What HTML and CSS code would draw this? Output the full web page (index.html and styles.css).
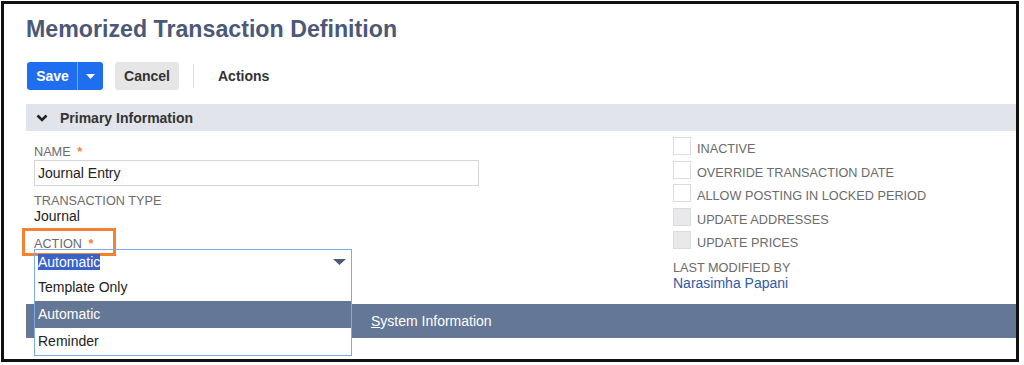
FILE: index.html
```html
<!DOCTYPE html>
<html lang="en">
<head>
    <meta charset="UTF-8">
    <meta name="viewport" content="width=device-width, initial-scale=1.0">
    <title>Memorized Transaction Definition</title>
    <link rel="stylesheet" href="styles.css">
</head>
<body>
    <div class="frame">
        <div class="page">
            <h1 class="page-title">Memorized Transaction Definition</h1>

            <div class="toolbar">
                <div class="btn-group">
                    <button class="btn btn-primary">Save</button>
                    <button class="btn btn-primary btn-caret" aria-label="More save options">
                        <svg width="9" height="5" viewBox="0 0 9 5"><path d="M0 0 L9 0 L4.5 5 Z" fill="#fff"/></svg>
                    </button>
                </div>
                <button class="btn btn-secondary">Cancel</button>
                <span class="toolbar-divider"></span>
                <button class="btn btn-link">Actions</button>
            </div>

            <div class="section-head">
                <svg class="chevron" width="12" height="8" viewBox="0 0 12 8"><path d="M1.5 1.5 L6 6 L10.5 1.5" fill="none" stroke="#222" stroke-width="2.6"/></svg>
                <span>Primary Information</span>
            </div>

            <div class="fields">
                <div class="col-left">
                    <div class="field">
                        <label class="field-label" for="name">Name <span class="req">*</span></label>
                        <input class="text-input" id="name" type="text" value="Journal Entry">
                    </div>
                    <div class="field">
                        <span class="field-label">Transaction Type</span>
                        <span class="field-value">Journal</span>
                    </div>
                    <div class="field">
                        <span class="field-label highlight-box">Action <span class="req">*</span></span>
                        <div class="select-wrap">
                            <div class="select">
                                <span class="selected-text">Automatic</span>
                                <svg class="select-arrow" width="13" height="6" viewBox="0 0 13 6"><path d="M0 0 L13 0 L6.5 6 Z" fill="#4e5b74"/></svg>
                            </div>
                            <ul class="dropdown">
                                <li>Template Only</li>
                                <li class="active">Automatic</li>
                                <li>Reminder</li>
                            </ul>
                        </div>
                    </div>
                </div>

                <div class="col-right">
                    <label class="check-row"><span class="checkbox"></span>Inactive</label>
                    <label class="check-row"><span class="checkbox"></span>Override Transaction Date</label>
                    <label class="check-row"><span class="checkbox"></span>Allow Posting in Locked Period</label>
                    <label class="check-row"><span class="checkbox disabled"></span>Update Addresses</label>
                    <label class="check-row"><span class="checkbox disabled"></span>Update Prices</label>
                    <div class="field modified">
                        <span class="field-label">Last Modified By</span>
                        <a class="field-link" href="#">Narasimha Papani</a>
                    </div>
                </div>
            </div>

            <div class="section-bar">
                <span><u>S</u>ystem Information</span>
            </div>

            <div class="fields fields-system">
                <div class="col-left">
                    <span class="field-label next-date">Next Date <span class="req">*</span></span>
                </div>
                <div class="col-right">
                    <span class="field-label">Next Transaction Date</span>
                </div>
            </div>
        </div>
    </div>
</body>
</html>
```

FILE: styles.css
```css
:root {
    --title-color: #4b5877;
    --primary: #1f6ef0;
    --label-color: #6b6b6b;
    --text-color: #222222;
    --head-bg: #e1e4ea;
    --bar-bg: #647796;
    --accent: #f5822f;
    --link: #3159a8;
}
*, *::before, *::after {
    box-sizing: border-box;
}
body {
    margin: 0;
    background: #ffffff;
    font-family: "Liberation Sans", Arial, sans-serif;
    color: var(--text-color);
}
.frame {
    margin: 1px;
    width: 1018px;
    height: 361px;
    border: 3px solid #111111;
    overflow: hidden;
    background: #ffffff;
}
.page {
    padding-left: 22px;
}
.page-title {
    margin: 0;
    padding-top: 11px;
    font-size: 23.2px;
    line-height: 28px;
    font-weight: bold;
    color: var(--title-color);
}
.toolbar {
    display: flex;
    align-items: center;
    margin-top: 19px;
    padding-left: 1px;
    height: 28px;
}
.btn {
    height: 28px;
    border: none;
    border-radius: 3px;
    font-family: inherit;
    font-size: 14px;
    font-weight: bold;
    padding: 0 10px;
    cursor: pointer;
}
.btn-group {
    display: flex;
}
.btn-primary {
    background: var(--primary);
    color: #ffffff;
}
.btn-group .btn-primary:first-child {
    width: 50px;
    border-radius: 3px 0 0 3px;
    padding: 0 0 0 1px;
}
.btn-caret {
    width: 26px;
    padding: 0;
    border-radius: 0 3px 3px 0;
    border-left: 1px solid #7aa6f5;
    display: flex;
    align-items: center;
    justify-content: center;
}
.btn-secondary {
    margin-left: 12px;
    width: 64px;
    padding: 0;
    background: #e6e6e6;
    color: #333333;
}
.toolbar-divider {
    width: 1px;
    height: 24px;
    margin-left: 14px;
    background: #dddddd;
}
.btn-link {
    margin-left: 14px;
    background: none;
    color: #333333;
}
.section-head {
    margin-top: 14px;
    height: 27px;
    display: flex;
    align-items: center;
    padding-left: 10px;
    background: var(--head-bg);
    font-size: 14px;
    font-weight: bold;
    color: #333333;
}
.chevron {
    margin-right: 12px;
}
.fields {
    display: grid;
    grid-template-columns: 639px 1fr;
    padding-left: 8px;
}
.col-left {
    padding-top: 14px;
}
.col-right {
    padding-top: 6px;
}
.field {
    display: flex;
    flex-direction: column;
}
.field + .field {
    margin-top: 8px;
}
.field-label {
    font-size: 12.7px;
    line-height: 14px;
    text-transform: uppercase;
    color: var(--label-color);
}
.req {
    margin-left: 3px;
    color: var(--accent);
    font-weight: bold;
}
.text-input {
    margin-top: 1px;
    width: 445px;
    height: 26px;
    border: 1px solid #d6d6d6;
    padding: 0 3px;
    font-family: inherit;
    font-size: 14px;
    color: var(--text-color);
}
.field-value {
    font-size: 14px;
    line-height: 17px;
}
.highlight-box {
    position: relative;
    align-self: flex-start;
    margin-top: 4px;
}
.highlight-box::before {
    content: '';
    position: absolute;
    left: -12px;
    top: -9px;
    width: 94px;
    height: 28px;
    border: 3px solid var(--accent);
}
.select-wrap {
    position: relative;
    width: 318px;
    margin-top: -2px;
}
.select {
    height: 26px;
    border: 1px solid #7ea9ea;
    display: flex;
    align-items: center;
    justify-content: space-between;
    padding: 0 5px 0 3px;
    font-size: 14px;
}
.selected-text {
    background: #3a62c9;
    color: #ffffff;
    line-height: 16px;
}
.dropdown {
    position: absolute;
    left: 0;
    top: 25px;
    width: 318px;
    margin: 0;
    padding: 0;
    list-style: none;
    background: #ffffff;
    border: 1px solid #7ea9ea;
    border-top: none;
    z-index: 2;
}
.dropdown li {
    height: 27px;
    line-height: 27px;
    padding-left: 3px;
    font-size: 14px;
    color: var(--text-color);
}
.dropdown li.active {
    background: var(--bar-bg);
    color: #ffffff;
}
.check-row {
    display: flex;
    align-items: flex-end;
    height: 18px;
    margin-bottom: 5.5px;
    font-size: 12.7px;
    line-height: 12px;
    text-transform: uppercase;
    color: var(--label-color);
}
.checkbox {
    width: 18px;
    height: 18px;
    border: 1px solid #dcdcdc;
    margin-right: 6px;
    flex-shrink: 0;
}
.checkbox.disabled {
    background: #e9e9ec;
}
.modified {
    margin-top: 12px;
}
.field-link {
    font-size: 14px;
    line-height: 17px;
    color: var(--link);
    text-decoration: none;
}
.section-bar {
    margin-top: 12px;
    height: 34px;
    display: flex;
    align-items: center;
    padding-left: 345px;
    background: var(--bar-bg);
    color: #ffffff;
    font-size: 14px;
}
.fields-system .col-left,
.fields-system .col-right {
    padding-top: 16px;
}
.next-date {
    padding-left: 16px;
}
```
